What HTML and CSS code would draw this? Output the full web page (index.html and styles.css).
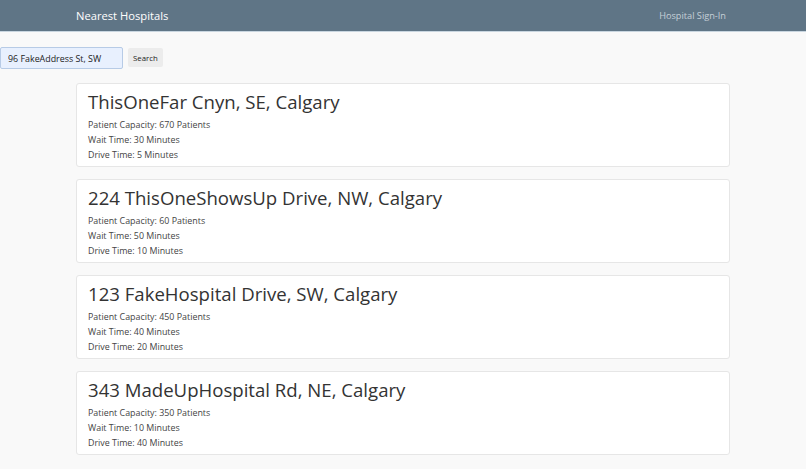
FILE: index.html
```html
<!DOCTYPE html>
<html>
<head>
<meta charset="utf-8">
<link rel="stylesheet" href="styles.css">
</head>
<body>
<nav class="navbar">
  <div class="container nav-inner">
    <span class="brand">Nearest Hospitals</span>
    <span class="nav-link">Hospital Sign-In</span>
  </div>
</nav>
<form class="search">
  <input class="search-input" type="text" value="96 FakeAddress St, SW">
  <button class="search-btn" type="button">Search</button>
</form>
<main class="container list">
  <div class="card">
    <h2 class="card-title">ThisOneFar Cnyn, SE, Calgary</h2>
    <p class="line">Patient Capacity: 670 Patients</p>
    <p class="line">Wait Time: 30 Minutes</p>
    <p class="line">Drive Time: 5 Minutes</p>
  </div>
  <div class="card">
    <h2 class="card-title">224 ThisOneShowsUp Drive, NW, Calgary</h2>
    <p class="line">Patient Capacity: 60 Patients</p>
    <p class="line">Wait Time: 50 Minutes</p>
    <p class="line">Drive Time: 10 Minutes</p>
  </div>
  <div class="card">
    <h2 class="card-title">123 FakeHospital Drive, SW, Calgary</h2>
    <p class="line">Patient Capacity: 450 Patients</p>
    <p class="line">Wait Time: 40 Minutes</p>
    <p class="line">Drive Time: 20 Minutes</p>
  </div>
  <div class="card">
    <h2 class="card-title">343 MadeUpHospital Rd, NE, Calgary</h2>
    <p class="line">Patient Capacity: 350 Patients</p>
    <p class="line">Wait Time: 10 Minutes</p>
    <p class="line">Drive Time: 40 Minutes</p>
  </div>
</main>
</body>
</html>
```
FILE: styles.css
```css
* { box-sizing: border-box; }
html, body { margin: 0; padding: 0; }
body {
  background: #f9f9f9;
  font-family: "Open Sans", "Noto Sans", sans-serif;
  color: #3a3a3a;
}
.container {
  width: 654px;
  margin: 0 auto;
}
.navbar {
  background: #5f7586;
  height: 32px;
  border-bottom: 1px solid #c9d6e0;
}
.nav-inner {
  height: 31px;
  display: flex;
  align-items: center;
  justify-content: space-between;
}
.brand {
  color: #ffffff;
  font-size: 11.2px;
}
.nav-link {
  color: #c5cfd7;
  font-size: 9.2px;
  padding-right: 4px;
}
.search {
  display: flex;
  align-items: flex-start;
  gap: 5px;
  padding-top: 15px;
  height: 37px;
}
.search-input {
  width: 123px;
  height: 22px;
  margin: 0;
  padding: 0 7px;
  border: 1px solid #b7cbe6;
  border-radius: 2px;
  background: #e8f0fe;
  font-family: inherit;
  font-size: 8.9px;
  color: #222;
}
.search-btn {
  margin-top: 1px;
  height: 19px;
  padding: 0 5px;
  border: none;
  border-radius: 2px;
  background: #ececec;
  font-family: inherit;
  font-size: 7.8px;
  color: #222;
}
.list {
  display: flex;
  flex-direction: column;
  gap: 12px;
  padding-top: 14px;
}
.card {
  background: #fff;
  border: 1px solid #e6e6e6;
  border-radius: 3px;
  height: 84px;
  padding: 6px 11px 7px;
}
.card-title {
  margin: 0 0 3px;
  font-weight: 400;
  font-size: 18.6px;
  line-height: 24px;
  color: #333;
}
.line {
  margin: 0;
  font-size: 8.9px;
  line-height: 15px;
  color: #444;
}
```
